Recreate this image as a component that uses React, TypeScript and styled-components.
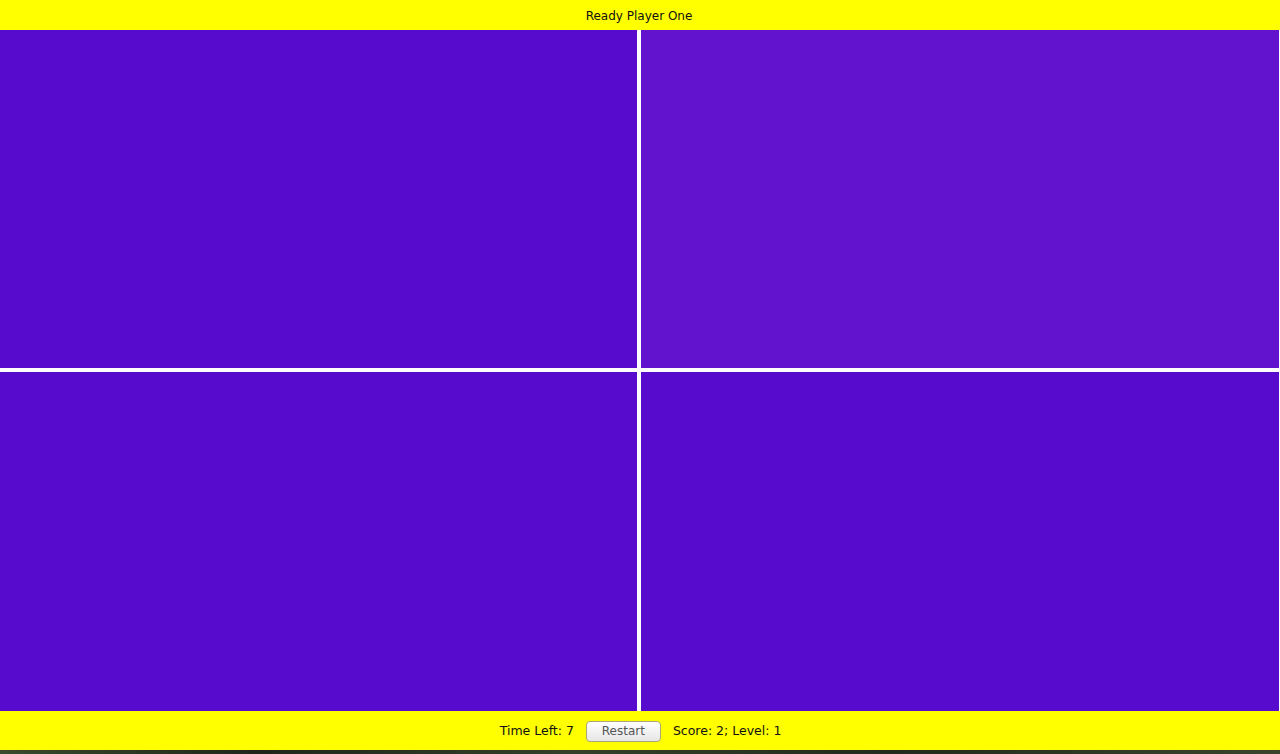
import React from "react";
import styled, { createGlobalStyle } from "styled-components";

const Global = createGlobalStyle`
  html, body { margin: 0; padding: 0; height: 100%; overflow: hidden; }
  body { font-family: "DejaVu Sans", "Liberation Sans", sans-serif; background: #2b3424; }
`;

const Frame = styled.div`
  width: 1280px;
  height: 754px;
  display: flex;
  flex-direction: column;
`;

const TitleBar = styled.div`
  height: 30px;
  background: #ffff00;
  display: flex;
  align-items: center;
  justify-content: center;
  font-size: 12px;
  color: #111;
  padding-top: 2px;
  padding-right: 2px;
  box-sizing: border-box;
`;

const Board = styled.div`
  flex: 1;
  display: grid;
  grid-template-columns: 637px 638px;
  grid-template-rows: 338px 1fr;
  gap: 4px;
  background: #ffffff;
  padding-right: 1px;
`;

const Tile = styled.div<{ $color: string }>`
  background: ${(p) => p.$color};
`;

const StatusBar = styled.div`
  height: 39px;
  background: #ffff00;
  display: flex;
  align-items: center;
  justify-content: center;
  gap: 12px;
  font-size: 12.5px;
  color: #111;
  padding-left: 1px;
`;

const Label = styled.span`
  line-height: 1;
  margin-top: 2px;
`;

const RestartButton = styled.button`
  width: 75px;
  height: 21px;
  border: 1px solid #a9a67a;
  border-radius: 4px;
  background: linear-gradient(#ffffff, #f2f2f2 50%, #e6e6e6);
  color: #555;
  font-family: inherit;
  font-size: 12px;
  padding: 0;
  display: flex;
  align-items: center;
  justify-content: center;
  margin-top: 1px;
`;

const Desktop = styled.div`
  height: 4px;
  background: linear-gradient(90deg, #3a4a2a, #1f2619 20%, #34402a 45%, #222a1b 70%, #3a452c);
`;

const tiles = ["#570bcd", "#6213ce", "#570bcd", "#570bcd"];

export default function App() {
  return (
    <>
      <Global />
      <Frame>
        <TitleBar>Ready Player One</TitleBar>
        <Board>
          {tiles.map((c, i) => (
            <Tile key={i} $color={c} />
          ))}
        </Board>
        <StatusBar>
          <Label>Time Left: 7</Label>
          <RestartButton>Restart</RestartButton>
          <Label>Score: 2; Level: 1</Label>
        </StatusBar>
        <Desktop />
      </Frame>
    </>
  );
}
